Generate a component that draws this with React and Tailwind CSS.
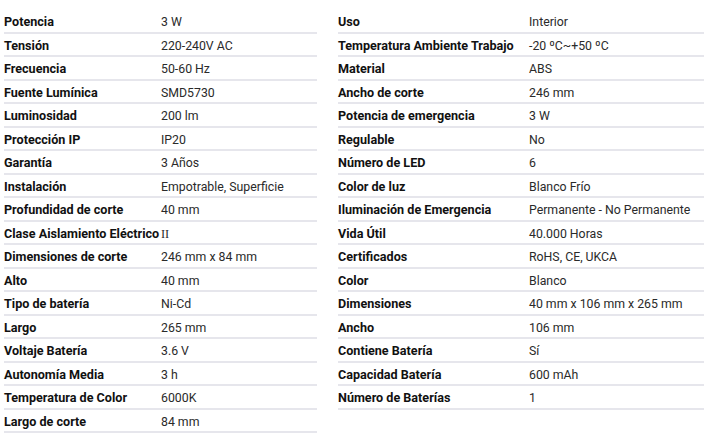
import React from "react";

const left = [
  ["Potencia", "3 W"],
  ["Tensión", "220-240V AC"],
  ["Frecuencia", "50-60 Hz"],
  ["Fuente Lumínica", "SMD5730"],
  ["Luminosidad", "200 lm"],
  ["Protección IP", "IP20"],
  ["Garantía", "3 Años"],
  ["Instalación", "Empotrable, Superficie"],
  ["Profundidad de corte", "40 mm"],
  ["Clase Aislamiento Eléctrico", "II"],
  ["Dimensiones de corte", "246 mm x 84 mm"],
  ["Alto", "40 mm"],
  ["Tipo de batería", "Ni-Cd"],
  ["Largo", "265 mm"],
  ["Voltaje Batería", "3.6 V"],
  ["Autonomía Media", "3 h"],
  ["Temperatura de Color", "6000K"],
  ["Largo de corte", "84 mm"],
];

const right = [
  ["Uso", "Interior"],
  ["Temperatura Ambiente Trabajo", "-20 ºC~+50 ºC"],
  ["Material", "ABS"],
  ["Ancho de corte", "246 mm"],
  ["Potencia de emergencia", "3 W"],
  ["Regulable", "No"],
  ["Número de LED", "6"],
  ["Color de luz", "Blanco Frío"],
  ["Iluminación de Emergencia", "Permanente - No Permanente"],
  ["Vida Útil", "40.000 Horas"],
  ["Certificados", "RoHS, CE, UKCA"],
  ["Color", "Blanco"],
  ["Dimensiones", "40 mm x 106 mm x 265 mm"],
  ["Ancho", "106 mm"],
  ["Contiene Batería", "Sí"],
  ["Capacidad Batería", "600 mAh"],
  ["Número de Baterías", "1"],
];

function Table({ rows, labelW }) {
  return (
    <div className="flex flex-col">
      {rows.map(([k, v]) => (
        <div key={k} className="flex items-center h-[23.5px] pt-[3px] border-b-2 border-[#e6e6ec] whitespace-nowrap">
          <div className={`${labelW} shrink-0 font-bold text-[#111111] text-[12.6px]`}>{k}</div>
          <div className={`text-[#2a2a2a] ${v === "II" ? "font-['Liberation_Serif',serif]" : ""}`}>{v}</div>
        </div>
      ))}
    </div>
  );
}

export default function App() {
  return (
    <div className="w-[704px] h-[440px] overflow-hidden bg-white font-['Roboto',sans-serif] text-[12.3px] leading-[16px]">
      <div className="flex gap-[21px] pl-[4px] pt-[10px]">
        <div className="w-[313px] shrink-0">
          <Table rows={left} labelW="w-[157px]" />
        </div>
        <div className="w-[366px] shrink-0">
          <Table rows={right} labelW="w-[191px]" />
        </div>
      </div>
    </div>
  );
}
